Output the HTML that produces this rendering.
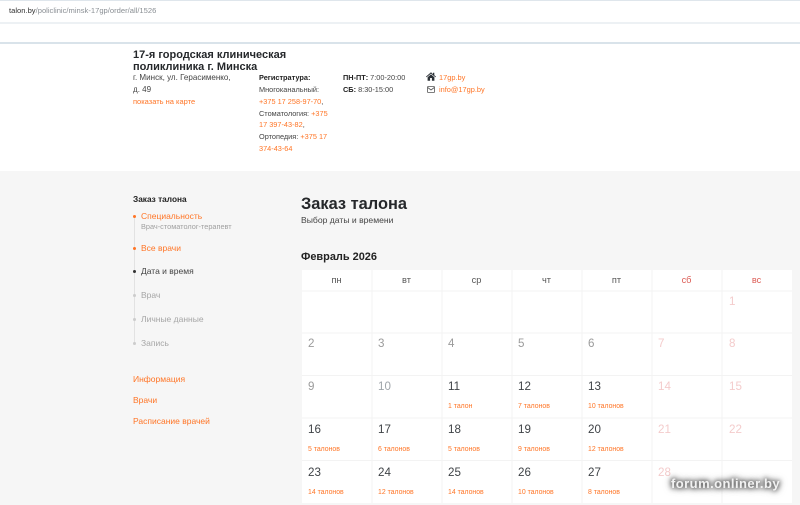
<!DOCTYPE html>
<html lang="ru"><head><meta charset="utf-8"><title>Заказ талона</title>
<style>
html,body{margin:0;padding:0;width:800px;height:505px;overflow:hidden;background:#fff}
body{position:relative;font-family:"Liberation Sans","Noto Sans CJK SC",sans-serif;color:#333}
.t{position:absolute;white-space:nowrap;line-height:1}
.o{color:#ff7526}
.g{color:#a6a6a6}
.b{position:absolute}
.d{position:absolute;font-size:11.6px;line-height:14px;white-space:nowrap;color:#3f4347}
.n{position:absolute;font-size:6.9px;line-height:10px;white-space:nowrap;color:#ff7526}
.h{position:absolute;top:270px;height:21px;line-height:21px;font-size:9.2px;text-align:center;width:70px;color:#555}
.dot{position:absolute;left:133px;width:3px;height:3px;border-radius:50%}
.s{font-size:8.5px;line-height:10px}
</style></head><body>
<div class="b" style="left:0;top:0;width:800px;height:1px;background:#dfe6ec"></div>
<div class="t" style="left:9px;top:6px;font-size:7.6px;color:#8a8f94;line-height:10px"><span style="color:#333">talon.by</span>/policlinic/minsk-17gp/order/all/1526</div>
<div class="b" style="left:0;top:22px;width:800px;height:2px;background:#edf1f4"></div>
<div class="b" style="left:0;top:42px;width:800px;height:2px;background:#d9e3ea"></div>

<div class="t" style="left:133px;top:49px;font-size:11px;font-weight:bold;line-height:12px;color:#25282b">17-я городская клиническая<br>поликлиника г. Минска</div>
<div class="t" style="left:133px;top:72px;font-size:8.05px;line-height:12px;color:#444">г. Минск, ул. Герасименко,<br>д. 49</div>
<div class="t o" style="left:133px;top:96px;font-size:7.5px;line-height:12px">показать на карте</div>

<div class="t" style="left:259px;top:72px;font-size:7.35px;line-height:11.85px;color:#444"><b style="color:#222">Регистратура:</b><br>Многоканальный:<br><span class="o">+375 17 258-97-70</span>,<br>Стоматология: <span class="o">+375</span><br><span class="o">17 397-43-82</span>,<br>Ортопедия: <span class="o">+375 17</span><br><span class="o">374-43-64</span></div>
<div class="t" style="left:343px;top:72px;font-size:7.35px;line-height:11.85px;color:#444"><b style="color:#222">ПН-ПТ:</b> 7:00-20:00<br><b style="color:#222">СБ:</b> 8:30-15:00</div>
<svg class="b" style="left:426px;top:72px" width="10" height="9" viewBox="0 0 10 9"><path d="M5 0.3 0 4.6l.6.7L5 1.6l4.4 3.7.6-.7L8.3 3.2V.8H7v1.3zM1.6 5.2V8.8h2.5V6h1.8v2.8h2.5V5.2L5 2.4z" fill="#2b3036"/></svg>
<svg class="b" style="left:427px;top:86px" width="8" height="7" viewBox="0 0 8 7"><rect x=".5" y=".5" width="7" height="6" rx=".6" fill="none" stroke="#555" stroke-width=".8"/><path d="M.7 1.5 4 4l3.3-2.5" fill="none" stroke="#555" stroke-width=".8"/></svg>
<div class="t o" style="left:439px;top:72px;font-size:7.4px;line-height:11.85px">17gp.by<br>info@17gp.by</div>

<div class="b" style="left:0;top:171px;width:800px;height:334px;background:#f6f6f6"></div>

<div class="t" style="left:133px;top:194px;font-size:8.3px;font-weight:bold;line-height:10px;color:#222">Заказ талона</div>
<div class="b" style="left:134px;top:216px;width:1px;height:128px;background:#e2e2e2"></div>
<div class="dot" style="top:215px;background:#ff7526"></div>
<div class="dot" style="top:247px;background:#ff7526"></div>
<div class="dot" style="top:270px;background:#333"></div>
<div class="dot" style="top:294px;background:#ccc"></div>
<div class="dot" style="top:318px;background:#ccc"></div>
<div class="dot" style="top:342px;background:#ccc"></div>
<div class="t o s" style="left:141px;top:211px">Специальность</div>
<div class="t" style="left:141px;top:222px;font-size:7.35px;line-height:10px;color:#a0a0a0">Врач-стоматолог-терапевт</div>
<div class="t o s" style="left:141px;top:243px">Все врачи</div>
<div class="t s" style="left:141px;top:266px;color:#444">Дата и время</div>
<div class="t g s" style="left:141px;top:290px">Врач</div>
<div class="t g s" style="left:141px;top:314px">Личные данные</div>
<div class="t g s" style="left:141px;top:338px">Запись</div>
<div class="t o s" style="left:133px;top:374px">Информация</div>
<div class="t o s" style="left:133px;top:395px">Врачи</div>
<div class="t o s" style="left:133px;top:416px">Расписание врачей</div>

<div class="t" style="left:301px;top:194px;font-size:16.4px;font-weight:bold;line-height:20px;color:#26282b">Заказ талона</div>
<div class="t" style="left:301px;top:215px;font-size:8.6px;line-height:10px;color:#444">Выбор даты и времени</div>
<div class="t" style="left:301px;top:251px;font-size:10.95px;font-weight:bold;line-height:13px;color:#222">Февраль 2026</div>

<svg class="b" style="left:302px;top:270px" width="490" height="234" viewBox="0 0 490 234">
<rect width="490" height="233" fill="#fff"/>
<g fill="#f3f3f3">
<rect x="69.5" width="1" height="233"/><rect x="139.5" width="1" height="233"/><rect x="209.5" width="1" height="233"/><rect x="279.5" width="1" height="233"/><rect x="349.5" width="1" height="233"/><rect x="419.5" width="1" height="233"/>
<rect y="20.5" width="490" height="1"/><rect y="62.5" width="490" height="1"/><rect y="105" width="490" height="1"/><rect y="147.5" width="490" height="1"/><rect y="190" width="490" height="1"/>
</g></svg>

<div class="h" style="left:301.5px">пн</div><div class="h" style="left:371.5px">вт</div><div class="h" style="left:441.5px">ср</div><div class="h" style="left:511.5px">чт</div><div class="h" style="left:581.5px">пт</div>
<div class="h" style="left:651.5px;color:#dc5c55">сб</div><div class="h" style="left:721.5px;color:#dc5c55">вс</div>

<div class="d" style="left:729px;top:295px;color:#f4cccc">1</div>
<div class="d" style="left:308px;top:337px;color:#9b9b9b">2</div>
<div class="d" style="left:378px;top:337px;color:#9b9b9b">3</div>
<div class="d" style="left:448px;top:337px;color:#9b9b9b">4</div>
<div class="d" style="left:518px;top:337px;color:#9b9b9b">5</div>
<div class="d" style="left:588px;top:337px;color:#9b9b9b">6</div>
<div class="d" style="left:658px;top:337px;color:#f4cccc">7</div>
<div class="d" style="left:729px;top:337px;color:#f4cccc">8</div>

<div class="d" style="left:308px;top:380px;color:#9b9b9b">9</div>
<div class="d" style="left:378px;top:380px;color:#9fa5aa">10</div>
<div class="d" style="left:448px;top:380px">11</div><div class="n" style="left:448px;top:402px">1 талон</div>
<div class="d" style="left:518px;top:380px">12</div><div class="n" style="left:518px;top:402px">7 талонов</div>
<div class="d" style="left:588px;top:380px">13</div><div class="n" style="left:588px;top:402px">10 талонов</div>
<div class="d" style="left:658px;top:380px;color:#f4cccc">14</div>
<div class="d" style="left:729px;top:380px;color:#f4cccc">15</div>

<div class="d" style="left:308px;top:423px">16</div><div class="n" style="left:308px;top:445px">5 талонов</div>
<div class="d" style="left:378px;top:423px">17</div><div class="n" style="left:378px;top:445px">6 талонов</div>
<div class="d" style="left:448px;top:423px">18</div><div class="n" style="left:448px;top:445px">5 талонов</div>
<div class="d" style="left:518px;top:423px">19</div><div class="n" style="left:518px;top:445px">9 талонов</div>
<div class="d" style="left:588px;top:423px">20</div><div class="n" style="left:588px;top:445px">12 талонов</div>
<div class="d" style="left:658px;top:423px;color:#f4cccc">21</div>
<div class="d" style="left:729px;top:423px;color:#f4cccc">22</div>

<div class="d" style="left:308px;top:466px">23</div><div class="n" style="left:308px;top:488px">14 талонов</div>
<div class="d" style="left:378px;top:466px">24</div><div class="n" style="left:378px;top:488px">12 талонов</div>
<div class="d" style="left:448px;top:466px">25</div><div class="n" style="left:448px;top:488px">14 талонов</div>
<div class="d" style="left:518px;top:466px">26</div><div class="n" style="left:518px;top:488px">10 талонов</div>
<div class="d" style="left:588px;top:466px">27</div><div class="n" style="left:588px;top:488px">8 талонов</div>
<div class="d" style="left:658px;top:466px;color:#f4cccc">28</div>

<div class="t" style="left:671px;top:476px;font-size:13px;font-weight:bold;line-height:16px;letter-spacing:.45px;color:#f2f2f2;text-shadow:0 0 4px #555,0 0 6px #555,0 0 8px #666">forum.onliner.by</div>
</body></html>
